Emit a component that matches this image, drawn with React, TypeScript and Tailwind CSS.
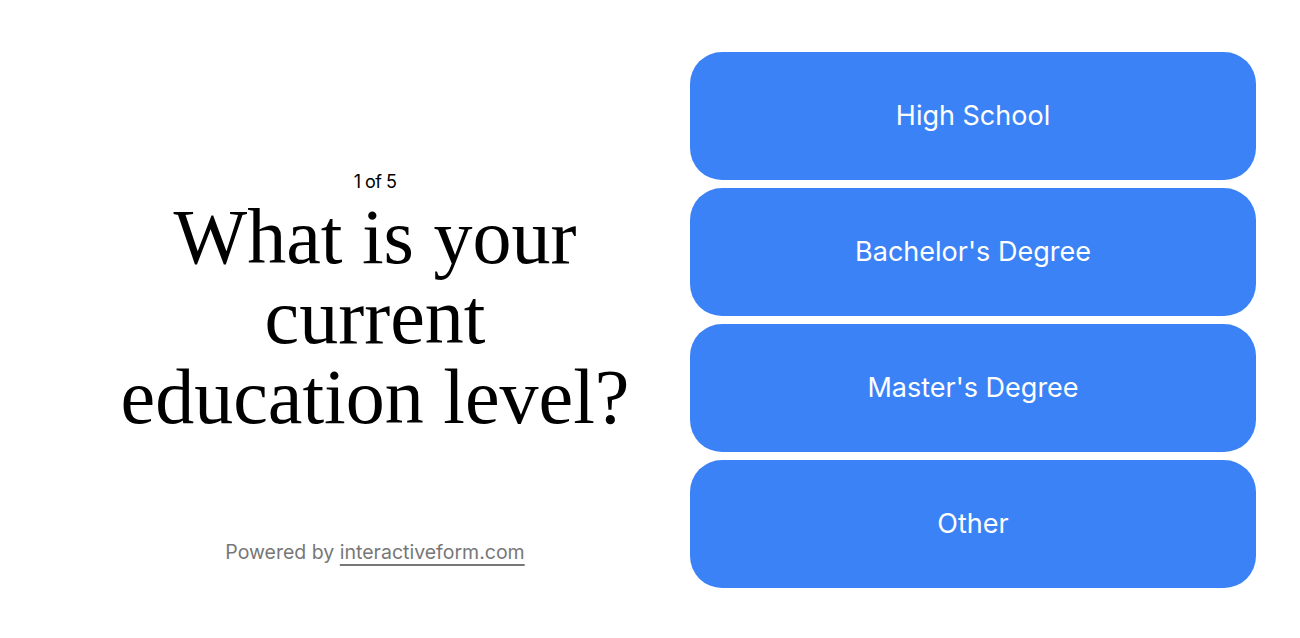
import React from "react";

const options = ["High School", "Bachelor's Degree", "Master's Degree", "Other"];

export default function App() {
  return (
    <div className="w-[1300px] h-[638px] bg-white flex pl-[60px] pt-[52px]">
      <div className="w-[630px] h-[536px] flex flex-col items-center">
        <div className="mt-[120px] flex flex-col items-center">
          <div className="text-[18px] leading-[20px] text-black tracking-[-0.03em] font-['Inter',sans-serif]">1 of 5</div>
          <h1 className="mt-[5px] text-center text-black text-[78px] leading-[80px] font-['Liberation_Serif','DejaVu_Serif',serif] font-normal">
            What is your
            <br />
            current
            <br />
            education level?
          </h1>
        </div>
        <div className="mt-auto mb-[24px] text-[19.5px] leading-[24px] text-[#777] font-['Inter',sans-serif]">
          Powered by{" "}
          <span className="underline decoration-[#777] underline-offset-[5px] decoration-[1.5px]">interactiveform.com</span>
        </div>
      </div>
      <div className="w-[566px] flex flex-col gap-2">
        {options.map((o) => (
          <button
            key={o}
            className="h-[128px] w-full rounded-[32px] bg-[#3b82f6] text-white text-[27px] font-['Inter',sans-serif] flex items-center justify-center"
          >
            {o}
          </button>
        ))}
      </div>
    </div>
  );
}
